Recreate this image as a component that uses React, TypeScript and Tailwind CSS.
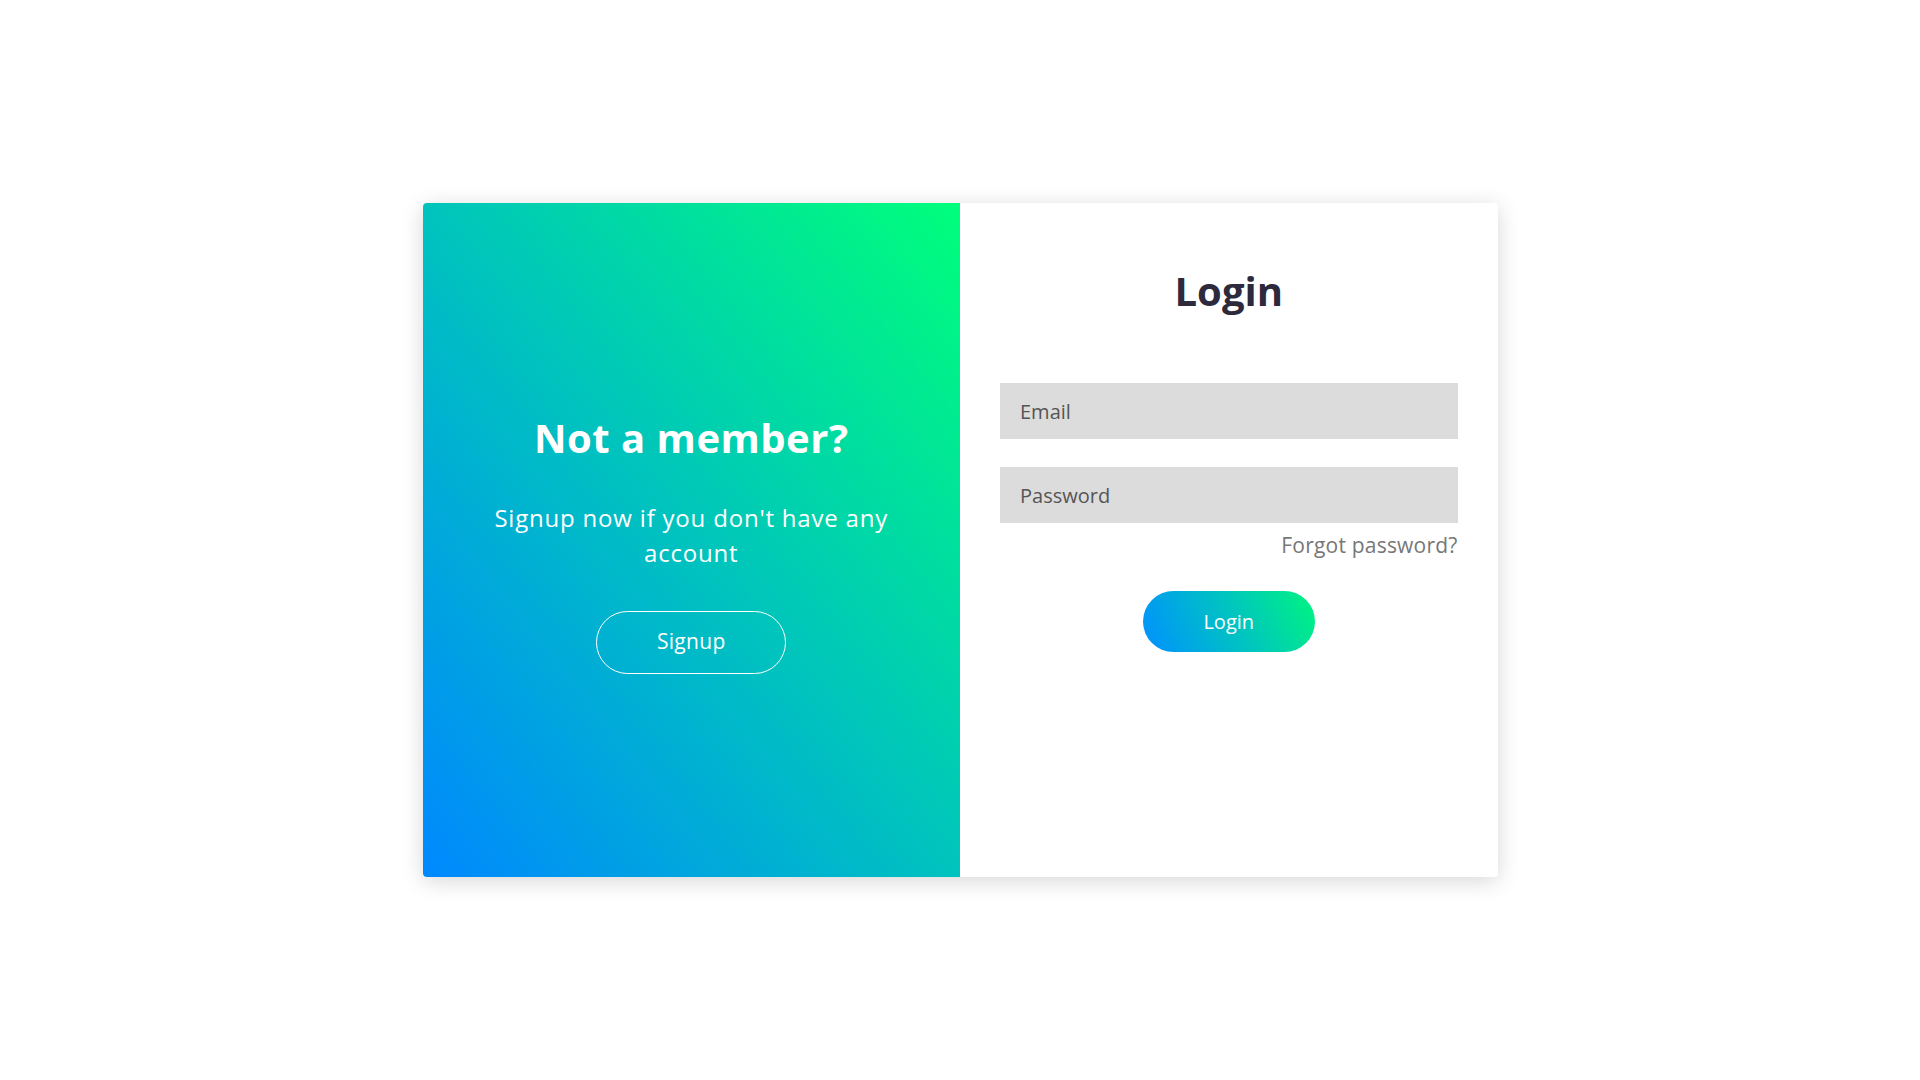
export default function App() {
  return (
    <div className="flex min-h-screen w-full items-center justify-center bg-white font-['Open_Sans','Liberation_Sans',sans-serif]">
      <div className="flex h-[674px] w-[1075px] overflow-hidden rounded-[4px] shadow-[0_4px_22px_rgba(0,0,0,0.16)]">
        {/* signup side */}
        <div className="flex w-1/2 flex-col items-center justify-center bg-[linear-gradient(to_top_right,#0088ff,#00ff7b)] px-10 pt-[7px] text-center text-white">
          <h2 className="text-[40px] font-bold leading-[48px] tracking-[0.5px]">Not a member?</h2>
          <p className="mt-[38px] text-[24px] leading-[35px] tracking-[0.8px]">
            Signup now if you don't have any
            <br />
            account
          </p>
          <button className="mt-[41px] h-[63px] w-[190px] rounded-full border border-white text-[21px] tracking-[0.3px] text-white">
            Signup
          </button>
        </div>

        {/* login side */}
        <div className="flex w-1/2 flex-col bg-white px-10 pt-[64px]">
          <h1 className="text-center text-[40px] font-bold leading-[48px] text-[#2c2a3c]">Login</h1>
          <form className="mt-[68px] flex flex-col" onSubmit={(e) => e.preventDefault()}>
            <input
              type="email"
              placeholder="Email"
              className="h-[56px] w-full bg-[#dcdcdc] px-5 text-[20px] text-[#333] outline-none placeholder:text-[#555]"
            />
            <input
              type="password"
              placeholder="Password"
              className="mt-[28px] h-[56px] w-full bg-[#dcdcdc] px-5 text-[20px] text-[#333] outline-none placeholder:text-[#555]"
            />
            <a href="#" className="mt-[7px] self-end text-[21px] leading-[30px] tracking-[0.2px] text-[#777]">
              Forgot password?
            </a>
            <button
              type="submit"
              className="mt-[31px] h-[61px] w-[172px] self-center rounded-full bg-[linear-gradient(65deg,#0090ff,#00c6be_55%,#00f57f)] text-[20px] text-white"
            >
              Login
            </button>
          </form>
        </div>
      </div>
    </div>
  );
}
